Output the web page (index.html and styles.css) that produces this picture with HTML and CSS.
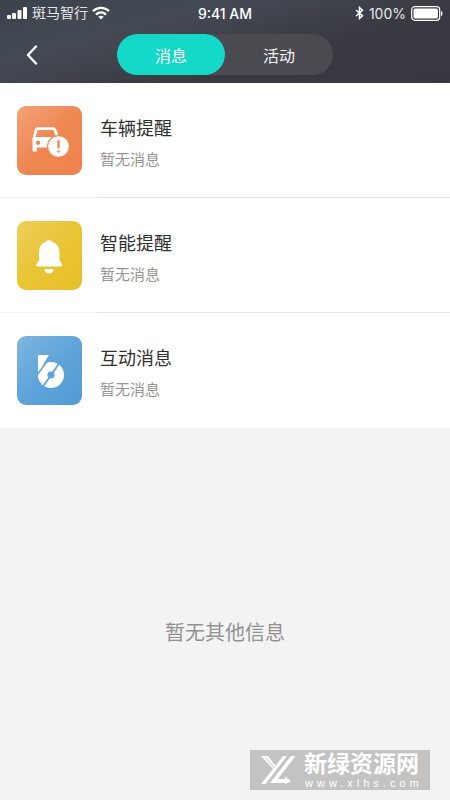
FILE: index.html
```html
<!DOCTYPE html>
<html lang="zh-CN">
<head>
<meta charset="utf-8">
<meta name="viewport" content="width=device-width, initial-scale=1">
<title>消息</title>
<link rel="stylesheet" href="styles.css">
</head>
<body>
<header class="header">
  <div class="status">
    <div class="status-side">
      <svg width="21" height="14" viewBox="0 0 21 14" fill="#fff" aria-hidden="true">
        <rect x="0" y="9" width="4" height="4" rx="1"/><rect x="5" y="7" width="4" height="6" rx="1"/><rect x="10.500" y="4" width="4" height="9" rx="1"/><rect x="16" y="1" width="4" height="12" rx="1"/>
      </svg>
      <span class="carrier">斑马智行</span>
      <svg width="18" height="14" viewBox="0 0 18 14" fill="none" stroke="#fff" stroke-width="2.400" aria-hidden="true">
        <path d="M1 5.200C5.500.700 12.500.700 17 5.200"/><path d="M4 8.600c2.900-2.800 7.100-2.800 10 0"/><path d="M9 13.500 6.300 10.800c1.600-1.300 3.800-1.300 5.400 0Z" fill="#fff" stroke="none"/>
      </svg>
    </div>
    <span class="time">9:41 AM</span>
    <div class="status-side status-right">
      <svg width="9" height="14" viewBox="0 0 9 14" fill="none" stroke="#fff" stroke-width="1.500" aria-hidden="true"><path d="M1 4 7.500 9.800 4.500 12.500V1.500l3 2.700L1 10"/></svg>
      <span class="percent">100%</span>
      <svg width="32" height="15" viewBox="0 0 32 15" aria-hidden="true"><rect x=".7" y=".7" width="28" height="13.600" rx="3" fill="none" stroke="#fff" stroke-width="1.200"/><rect x="2.500" y="2.500" width="24.400" height="10" rx="1.500" fill="#fff"/><path d="M30 5c2 .6 2 4.400 0 5Z" fill="#fff"/></svg>
    </div>
  </div>
  <nav class="nav">
    <button class="back" type="button" aria-label="返回">
      <svg width="12" height="20" viewBox="0 0 12 20" fill="none" stroke="#fff" stroke-width="2.400" stroke-linecap="round" stroke-linejoin="round"><path d="M10 1.500 2 10l8 8.500"/></svg>
    </button>
    <div class="tabs">
      <button class="tab tab-active" type="button">消息</button>
      <button class="tab" type="button">活动</button>
    </div>
  </nav>
</header>
<main class="main">
  <ul class="list">
    <li class="row">
      <span class="tile tile-orange">
        <svg width="65" height="69" viewBox="0 0 65 69" aria-hidden="true">
          <path fill="#fff" fill-rule="evenodd" d="M18 23q.6-1.800 2.400-1.800h16.200q1.600 0 2.400 1.800l2.800 7A12 12 0 0 0 31 41v.5H20v3q0 1-1 1h-2.500q-1 0-1-1V33l.7-3Zm2.700 1-2.200 7h17l3-1.500-2.300-5.500ZM21 34.500a2.200 2.200 0 1 0 0 4.400 2.200 2.200 0 0 0 0-4.400Z"/>
          <circle cx="41.500" cy="40.500" r="11.500" fill="#f08c58"/><circle cx="41.500" cy="40.500" r="10.300" fill="#fff"/>
          <path d="M41.500 35v6.500M41.500 45.300v.400" stroke="#ef8753" stroke-width="2.300" stroke-linecap="round"/>
        </svg>
      </span>
      <div class="copy"><h2 class="title">车辆提醒</h2><p class="sub">暂无消息</p></div>
    </li>
    <li class="row">
      <span class="tile tile-yellow">
        <svg width="65" height="69" viewBox="0 0 65 69" fill="#fff" aria-hidden="true">
          <path d="M32 19q2 0 3 1.800c5 1.400 7.500 5.600 7.500 11.200v7.500l2.300 3.500q.8 2.500-1.500 2.500H21q-2.300 0-1.500-2.500l2.500-3.500V32c0-5.600 2.300-9.800 7-11.200q1-1.800 3-1.800Z"/><path d="M27.500 48h9a4.500 4.500 0 0 1-9 0Z"/>
        </svg>
      </span>
      <div class="copy"><h2 class="title">智能提醒</h2><p class="sub">暂无消息</p></div>
    </li>
    <li class="row">
      <span class="tile tile-blue">
        <svg width="65" height="69" viewBox="0 0 65 69" aria-hidden="true">
          <circle cx="34" cy="39" r="13" fill="#fff"/>
          <path fill="#fff" d="M21 19h11L22 35h-1Z"/>
          <path d="M34 20 20.500 38.500" stroke="#62a6da" stroke-width="1.600"/>
          <path d="M43.500 25.500 25 52" stroke="#5ea4da" stroke-width="1.800"/>
          <circle cx="34" cy="39" r="3.600" fill="#5ea4da"/>
        </svg>
      </span>
      <div class="copy"><h2 class="title">互动消息</h2><p class="sub">暂无消息</p></div>
    </li>
  </ul>
  <p class="empty">暂无其他信息</p>
</main>
<aside class="watermark">
  <svg width="36" height="30" viewBox="0 0 36 30" aria-hidden="true">
    <path d="M0 1h7l7.500 10L22 1h4L4.500 29H0L12 14Z" fill="#fff"/>
    <path d="M4.500 2.500 13.300 13" stroke="#c3c3c3" stroke-width="1"/>
    <path d="M30 1h4.500L17 24h7v-2.500l6 4.500-6 3.500V28H9Z" fill="#fff"/>
  </svg>
  <div class="brand"><strong class="brand-name">新绿资源网</strong><span class="brand-url">www.xlhs.com</span></div>
</aside>
</body>
</html>
```
FILE: styles.css
```css
* { box-sizing: border-box; }
body {
  margin: 0;
  min-height: 100vh;
  position: relative;
  display: flex;
  flex-direction: column;
  background: #f3f3f3;
  font-family: "Liberation Sans", "Noto Sans CJK SC", sans-serif;
}
h2, p, ul { margin: 0; padding: 0; }
svg { display: block; }
button { border: 0; padding: 0; background: none; color: inherit; font: inherit; }
.header {
  color: #fff;
  background: linear-gradient(165deg, #3c424a 0%, #444a54 30%, #393941 65%, #38373f 100%);
}
.status {
  display: grid;
  grid-template-columns: 1fr auto 1fr;
  align-items: center;
  height: 26px;
  padding: 0 7px;
}
.status-side { display: flex; align-items: center; gap: 4px; }
.status-right { justify-content: flex-end; gap: 5px; }
.carrier { font-size: 14px; line-height: 20px; color: #e4e5e8; }
.time { font-family: Inter, sans-serif; font-size: 14px; font-weight: 500; }
.percent { font-family: Inter, sans-serif; font-size: 14px; color: #e8e8ea; }
.nav {
  display: grid;
  grid-template-columns: 1fr auto 1fr;
  padding: 8px 0;
}
.back {
  display: flex;
  align-items: center;
  justify-self: start;
  padding: 0 26px;
}
.tabs { display: flex; border-radius: 21px; background: #4a4a50; }
.tab {
  width: 108px;
  height: 41px;
  border-radius: 21px;
  font-size: 16px;
  color: #f2f2f3;
}
.tab-active { background: #14d8c8; color: #fff; }
.main { flex: 1; }
.list { list-style: none; background: #fff; }
.row {
  display: flex;
  align-items: center;
  gap: 18px;
  height: 115px;
  padding-left: 17px;
  background: linear-gradient(90deg, #f4f4f4 97px, #e2e2e2 97px) bottom / 100% 1px no-repeat;
}
.row:last-child { background: none; }
.tile { border-radius: 9px; overflow: hidden; }
.tile-orange { background: linear-gradient(135deg, #f3a378, #ef8753 50%, #ee824c); }
.tile-yellow { background: linear-gradient(135deg, #eed05c, #e9c434 50%, #e8bf27); }
.tile-blue { background: linear-gradient(135deg, #80b6e0, #5ea4da 50%, #529bd3); }
.copy { padding-top: 4px; }
.title { font-size: 18px; line-height: 26px; font-weight: 400; color: #303030; }
.sub { margin-top: 8px; font-size: 15px; line-height: 20px; font-weight: 400; color: #969696; }
.empty {
  padding-top: 190px;
  text-align: center;
  font-size: 20px;
  line-height: 30px;
  color: #929292;
}
.watermark {
  position: absolute;
  right: 20px;
  bottom: 10px;
  display: flex;
  align-items: center;
  gap: 7px;
  height: 40px;
  padding: 0 11px;
  background: #c3c3c3;
  color: #fff;
}
.brand { display: flex; flex-direction: column; }
.brand-name { font-size: 23px; line-height: 26px; }
.brand-url { font-size: 11px; line-height: 12px; letter-spacing: 4px; padding-left: 1px; margin-right: -4px; }
```
